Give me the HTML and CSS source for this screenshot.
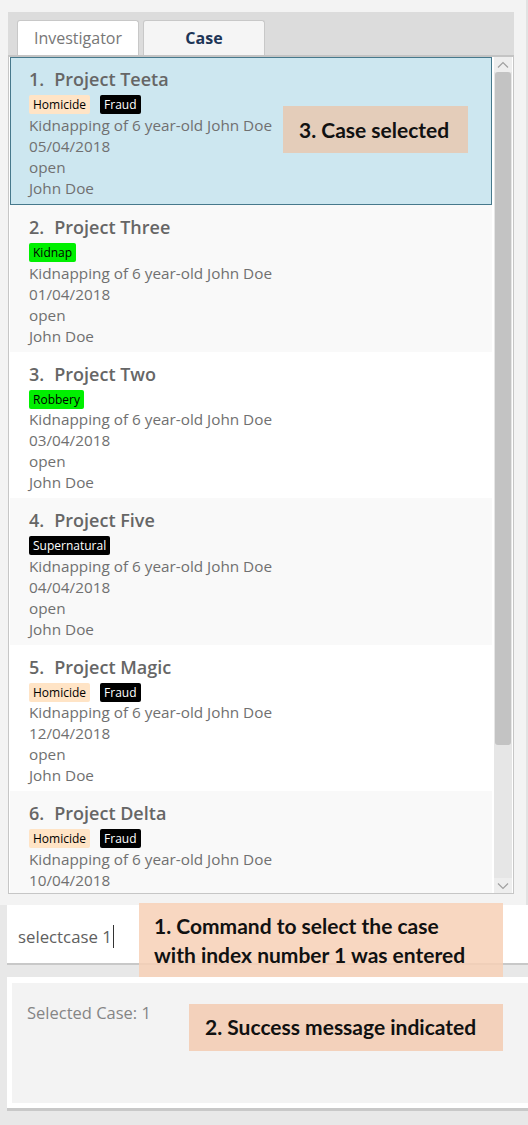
FILE: index.html
```html
<!DOCTYPE html>
<html>
<head>
<meta charset="utf-8">
<link rel="stylesheet" href="styles.css">
</head>
<body>
<div class="app">
  <div class="top">
    <div class="tabpane">
      <div class="tabheader">
        <div class="tab">Investigator</div>
        <div class="tab active">Case</div>
      </div>
      <div class="listframe">
        <div class="list">
          <div class="cell selected">
            <div class="title"><span class="idx">1.</span>Project Teeta</div>
            <div class="tags"><span class="tag homicide">Homicide</span><span class="tag fraud">Fraud</span></div>
            <div class="line">Kidnapping of 6 year-old John Doe</div>
            <div class="line">05/04/2018</div>
            <div class="line">open</div>
            <div class="line">John Doe</div>
          </div>
          <div class="cell alt">
            <div class="title"><span class="idx">2.</span>Project Three</div>
            <div class="tags"><span class="tag green">Kidnap</span></div>
            <div class="line">Kidnapping of 6 year-old John Doe</div>
            <div class="line">01/04/2018</div>
            <div class="line">open</div>
            <div class="line">John Doe</div>
          </div>
          <div class="cell">
            <div class="title"><span class="idx">3.</span>Project Two</div>
            <div class="tags"><span class="tag green">Robbery</span></div>
            <div class="line">Kidnapping of 6 year-old John Doe</div>
            <div class="line">03/04/2018</div>
            <div class="line">open</div>
            <div class="line">John Doe</div>
          </div>
          <div class="cell alt">
            <div class="title"><span class="idx">4.</span>Project Five</div>
            <div class="tags"><span class="tag fraud">Supernatural</span></div>
            <div class="line">Kidnapping of 6 year-old John Doe</div>
            <div class="line">04/04/2018</div>
            <div class="line">open</div>
            <div class="line">John Doe</div>
          </div>
          <div class="cell">
            <div class="title"><span class="idx">5.</span>Project Magic</div>
            <div class="tags"><span class="tag homicide">Homicide</span><span class="tag fraud">Fraud</span></div>
            <div class="line">Kidnapping of 6 year-old John Doe</div>
            <div class="line">12/04/2018</div>
            <div class="line">open</div>
            <div class="line">John Doe</div>
          </div>
          <div class="cell alt">
            <div class="title"><span class="idx">6.</span>Project Delta</div>
            <div class="tags"><span class="tag homicide">Homicide</span><span class="tag fraud">Fraud</span></div>
            <div class="line">Kidnapping of 6 year-old John Doe</div>
            <div class="line">10/04/2018</div>
          </div>
        </div>
        <div class="scrollbar">
          <div class="arrow">
            <svg width="12" height="8" viewBox="0 0 12 8"><path d="M1 6.5 L6 1.5 L11 6.5" fill="none" stroke="#a0a0a0" stroke-width="1.2"/></svg>
          </div>
          <div class="track"><div class="thumb"></div></div>
          <div class="arrow">
            <svg width="12" height="8" viewBox="0 0 12 8"><path d="M1 1.5 L6 6.5 L11 1.5" fill="none" stroke="#a0a0a0" stroke-width="1.2"/></svg>
          </div>
        </div>
      </div>
    </div>
  </div>
  <div class="bottom">
    <div class="command"><span class="cmdtext">selectcase 1</span><span class="caret"></span></div>
    <div class="result">
      <div class="resultinner">Selected Case: 1</div>
    </div>
  </div>
  <div class="note note3">3. Case selected</div>
  <div class="note note1">1. Command to select the case<br>with index number 1 was entered</div>
  <div class="note note2">2. Success message indicated</div>
</div>
</body>
</html>
```
FILE: styles.css
```css
* { box-sizing: border-box; }
html, body { margin: 0; padding: 0; }
body {
  width: 528px;
  height: 1125px;
  background: #f8f8f8;
  font-family: "Open Sans", "Noto Sans", sans-serif;
  overflow: hidden;
}
.app { position: relative; width: 528px; height: 1125px; }

.top {
  background: #f3f3f3;
  padding: 12px 14px 11px 8px;
  border-right: 2px solid #e2e2e2;
}
.tabpane { width: 506px; }
.tabheader {
  height: 45px;
  background: #dcdcdc;
  border-bottom: 2px solid #c4c4c4;
  display: flex;
  gap: 4px;
  padding: 8px 0 0 9px;
}
.tab {
  width: 122px;
  height: 35px;
  background: #ffffff;
  border: 1px solid #c8c8c8;
  border-bottom: none;
  border-radius: 3px 3px 0 0;
  font-size: 16px;
  color: #777777;
  display: flex;
  align-items: center;
  justify-content: center;
  padding-bottom: 1px;
}
.tab.active {
  background: #f5f5f5;
  color: #1d3557;
  font-weight: 700;
}

.listframe {
  height: 837px;
  border: 1px solid #c6c6c6;
  border-top: none;
  background: #ffffff;
  display: flex;
  padding: 0 1px 0 1px;
}
.list {
  width: 482px;
  height: 836px;
  overflow: hidden;
  margin-right: 2px;
}
.cell {
  height: 146.5px;
  padding: 10px 0 0 19px;
  background: #ffffff;
  color: #6e6e6e;
}
.cell.alt { background: #f9f9f9; }
.cell.selected {
  height: 148px;
  background: #cde7f0;
  border: 1px solid #47798c;
  padding: 9px 0 0 18px;
}
.title {
  font-size: 18px;
  font-weight: 600;
  line-height: 24px;
  color: #666666;
}
.idx { margin-right: 10px; }
.tags {
  height: 23.5px;
  padding-top: 4px;
  display: flex;
  gap: 10px;
}
.tag {
  height: 19px;
  line-height: 19px;
  padding: 0 4px;
  font-size: 12px;
  border-radius: 2px;
  color: #000000;
}
.tag.homicide { background: #ffe4c6; }
.tag.fraud { background: #000000; color: #ffffff; }
.tag.green { background: #00f000; }
.line {
  font-size: 15.3px;
  line-height: 21px;
  color: #707070;
}

.scrollbar {
  width: 18px;
  display: flex;
  flex-direction: column;
  background: #e6e6e6;
}
.arrow {
  height: 15px;
  display: flex;
  align-items: center;
  justify-content: center;
  background: #eeeeee;
}
.track { flex: 1; padding: 0 1px; }
.thumb {
  height: 673px;
  background: #c3c3c3;
  border-radius: 3px;
}

.bottom {
  background: #e8e8e8;
  padding: 0 0 7px 7px;
  height: 231px;
}
.command {
  height: 60px;
  background: #ffffff;
  border-bottom: 2px solid #c8c8c8;
  display: flex;
  align-items: center;
  padding: 4px 0 0 11px;
  font-size: 16.8px;
  font-weight: 400;
  color: #606060;
}
.caret {
  width: 1px;
  height: 23px;
  background: #333333;
  margin-left: 1px;
}
.result {
  margin-top: 12px;
  height: 134px;
  background: #ffffff;
  padding: 6px 0 5px 5px;
  border-bottom: 3px solid #c8c8c8;
}
.resultinner {
  height: 100%;
  background: #f3f3f3;
  padding: 18px 0 0 15px;
  font-size: 16.5px;
  font-weight: 400;
  color: #858585;
}

.note {
  position: absolute;
  font-family: Lato, "Liberation Sans", sans-serif;
  font-weight: 700;
  color: #111111;
  font-size: 21px;
}
.note3 {
  left: 283px; top: 106px; width: 185px; height: 47px;
  background: #e4cdba;
  padding: 0 0 0 16px;
  line-height: 47px;
}
.note1 {
  left: 139px; top: 903px; width: 364px; height: 74px;
  background: rgba(247, 208, 182, 0.85);
  padding: 8px 0 0 15px;
  line-height: 29px;
}
.note2 {
  left: 189px; top: 1004px; width: 314px; height: 47px;
  background: #f3d1bb;
  padding: 0 0 0 16px;
  line-height: 46px;
}
```
